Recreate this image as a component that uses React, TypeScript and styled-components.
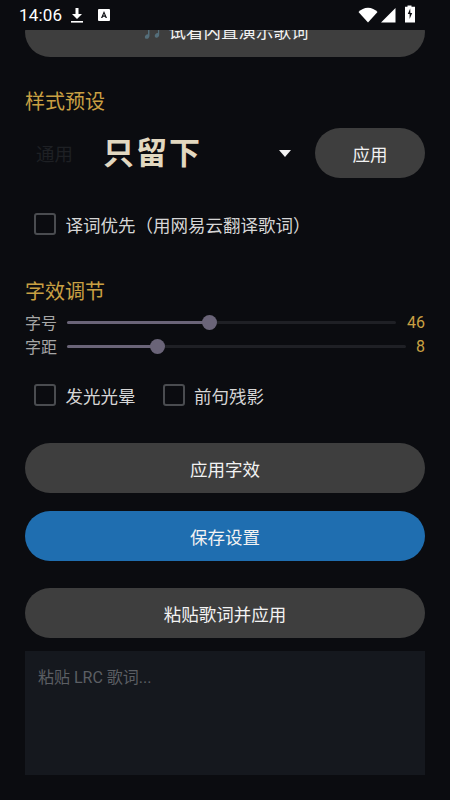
import React from 'react';
import styled, { createGlobalStyle } from 'styled-components';

const GlobalStyle = createGlobalStyle`
  html, body {
    margin: 0;
    padding: 0;
    background: #0b0c10;
    font-family: "Roboto", "Noto Sans CJK SC", sans-serif;
  }
  * {
    box-sizing: border-box;
  }
`;

const Screen = styled.div`
  width: 450px;
  height: 800px;
  display: flex;
  flex-direction: column;
  overflow: hidden;
  background: #0b0c10;
`;

const StatusBar = styled.div`
  height: 30px;
  flex: none;
  display: flex;
  align-items: center;
  padding: 0 34px 0 19px;
  color: #fff;
  position: relative;
  z-index: 1;
  background: #0b0c10;
`;

const Clock = styled.span`
  font-size: 17px;
  line-height: 30px;
  letter-spacing: 0.2px;
  margin-right: 8px;
`;

const StatusIcons = styled.div`
  margin-left: auto;
  display: flex;
  align-items: center;
  gap: 2px;
`;

const Content = styled.div`
  flex: 1;
  display: flex;
  flex-direction: column;
  padding: 0 25px;
`;

const Button = styled.div<{ $blue?: boolean; $top?: number }>`
  height: 50px;
  flex: none;
  border-radius: 25px;
  margin-top: ${({ $top }) => $top || 0}px;
  display: flex;
  align-items: center;
  justify-content: center;
  background: ${({ $blue }) => ($blue ? '#1f6eb0' : '#3e3e3e')};
  color: #f2f2f2;
  font-size: 17.5px;
`;

const ScrolledButton = styled(Button)`
  margin-top: -23px;
  gap: 6px;
  padding-bottom: 4px;
`;

const NoteGlyph = styled.span`
  color: #4d6468;
  font-size: 17px;
`;

const Heading = styled.div<{ $top: number }>`
  margin-top: ${({ $top }) => $top}px;
  height: 28px;
  line-height: 28px;
  color: #c9a043;
  font-size: 20px;
`;

const PresetRow = styled.div`
  margin-top: 12px;
  display: flex;
  align-items: center;
  height: 50px;
`;

const PresetSelect = styled.div`
  flex: 1;
  display: flex;
  align-items: center;
  padding-left: 11px;
  padding-right: 22px;
`;

const PresetCategory = styled.span`
  color: #1e2024;
  font-size: 18.5px;
  width: 69px;
`;

const PresetName = styled.span`
  color: #e2d8c0;
  font-size: 31px;
  font-weight: 700;
  letter-spacing: 2px;
  flex: 1;
  margin: -6px 0 0 -2px;
`;

const Caret = styled.span`
  width: 0;
  height: 0;
  border-left: 6.5px solid transparent;
  border-right: 6.5px solid transparent;
  border-top: 7px solid #f4f4f4;
  margin-right: 2px;
`;

const ApplyButton = styled(Button)`
  width: 110px;
`;

const CheckRow = styled.div<{ $top: number }>`
  margin-top: ${({ $top }) => $top}px;
  padding-left: 9px;
  display: flex;
  align-items: center;
  height: 22px;
  gap: 27px;
`;

const Check = styled.label`
  display: flex;
  align-items: center;
  gap: 9.5px;
  color: #d6d6d6;
  font-size: 17.5px;
`;

const Box = styled.span`
  width: 22px;
  height: 22px;
  border: 2px solid #4a4c50;
  border-radius: 3px;
  flex: none;
`;

const SliderRow = styled.div<{ $top: number }>`
  margin-top: ${({ $top }) => $top}px;
  height: 20px;
  display: flex;
  align-items: center;
`;

const SliderLabel = styled.span`
  color: #a6a6a6;
  font-size: 16px;
  width: 42px;
  flex: none;
`;

const Track = styled.div`
  flex: 1;
  height: 3px;
  background: #1f2025;
  border-radius: 2px;
  position: relative;
`;

const TrackFill = styled.div`
  height: 100%;
  background: #6a6478;
  border-radius: 2px;
  position: relative;
`;

const Thumb = styled.span`
  position: absolute;
  right: -7.5px;
  top: -6px;
  width: 15px;
  height: 15px;
  border-radius: 50%;
  background: #6a6478;
`;

const SliderValue = styled.span<{ $wide?: boolean }>`
  color: #c9a043;
  font-size: 16px;
  text-align: right;
  flex: none;
  width: ${({ $wide }) => ($wide ? 29 : 19)}px;
`;

const LyricsBox = styled.div`
  margin-top: 13px;
  height: 124px;
  flex: none;
  background: #15181e;
  padding: 16px 13px;
  color: #5c5f64;
  font-size: 16px;
  line-height: 22px;
`;

const Slider = ({ label, value, fill, wide }: { label: string; value: string; fill: number; wide?: boolean; }) => (
  <>
    <SliderLabel>{label}</SliderLabel>
    <Track>
      <TrackFill style={{ width: `${fill}%` }}>
        <Thumb />
      </TrackFill>
    </Track>
    <SliderValue $wide={wide}>{value}</SliderValue>
  </>
);

export default function App() {
  return (
    <Screen>
      <GlobalStyle />
      <StatusBar>
        <Clock>14:06</Clock>
        <svg width="14" height="18" viewBox="0 0 14 18" fill="#fff">
          <path d="M5.5 2h3v6h3.5L7 13 2 8h3.5z" />
          <rect x="1" y="15" width="12" height="1.6" />
        </svg>
        <svg width="14" height="14" viewBox="0 0 14 14" style={{ marginLeft: 13 }}>
          <rect width="12" height="12" y="1" x="1" rx="1" fill="#fff" />
          <path d="M7 3 4 10h1.4l.5-1.3h2.2l.5 1.3H10zM6.3 7.6 7 5.6l.7 2z" fill="#0b0c10" fillRule="evenodd" />
        </svg>
        <StatusIcons>
          <svg width="20" height="16" viewBox="0 0 20 16" fill="#fff">
            <path d="M0.5 5C3 2.4 6.3 0.8 10 0.8s7 1.6 9.5 4.2L10 15.5z" />
          </svg>
          <svg width="16" height="16" viewBox="0 0 16 16" fill="#fff">
            <path d="M15.5 1v14.5H1z" />
          </svg>
          <svg width="12" height="18" viewBox="0 0 12 18" style={{ marginLeft: 6, marginTop: -2 }}>
            <path d="M3.5 0.5h4v1.2H11V17.5H1V1.7h2.5z" fill="#fff" />
            <path d="M6.2 3.5 3.8 9h1.8v5L8.2 8H6.4z" fill="#0b0c10" />
          </svg>
        </StatusIcons>
      </StatusBar>
      <Content>
        <ScrolledButton>
          <NoteGlyph>🎵</NoteGlyph>
          试看内置演示歌词
        </ScrolledButton>
        <Heading $top={31}>样式预设</Heading>
        <PresetRow>
          <PresetSelect>
            <PresetCategory>通用</PresetCategory>
            <PresetName>只留下</PresetName>
            <Caret />
          </PresetSelect>
          <ApplyButton>应用</ApplyButton>
        </PresetRow>
        <CheckRow $top={35}>
          <Check><Box />译词优先（用网易云翻译歌词）</Check>
        </CheckRow>
        <Heading $top={43}>字效调节</Heading>
        <SliderRow $top={6}>
          <Slider label="字号" value="46" fill={43.3} wide />
        </SliderRow>
        <SliderRow $top={4}>
          <Slider label="字距" value="8" fill={26.6} />
        </SliderRow>
        <CheckRow $top={28}>
          <Check><Box />发光光晕</Check>
          <Check><Box />前句残影</Check>
        </CheckRow>
        <Button $top={37}>应用字效</Button>
        <Button $blue $top={18}>保存设置</Button>
        <Button $top={27}>粘贴歌词并应用</Button>
        <LyricsBox>粘贴 LRC 歌词...</LyricsBox>
      </Content>
    </Screen>
  );
}
